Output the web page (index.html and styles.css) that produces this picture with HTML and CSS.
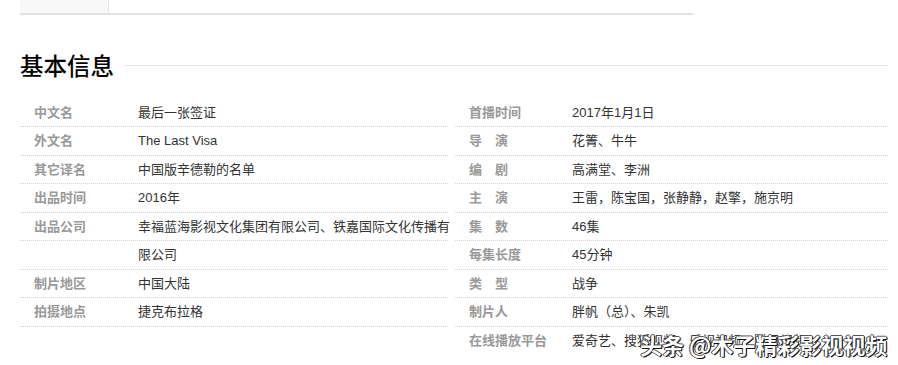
FILE: index.html
```
<!DOCTYPE html>
<html lang="zh-CN">
<head>
<meta charset="utf-8">
<title>基本信息</title>
<link rel="stylesheet" href="styles.css">
</head>
<body>
<div class="page">
  <div class="tabs"><div class="tab"></div></div>
  <div class="heading">
    <h2>基本信息</h2>
    <div class="rule"></div>
  </div>
  <div class="info">
    <dl class="col col-left">
      <div class="row"><dt>中文名</dt><dd>最后一张签证</dd></div>
      <div class="row"><dt>外文名</dt><dd>The Last Visa</dd></div>
      <div class="row"><dt>其它译名</dt><dd>中国版辛德勒的名单</dd></div>
      <div class="row"><dt>出品时间</dt><dd>2016年</dd></div>
      <div class="row"><dt>出品公司</dt><dd>幸福蓝海影视文化集团有限公司、铁嘉国际文化传播有</dd></div>
      <div class="row"><dt></dt><dd>限公司</dd></div>
      <div class="row"><dt>制片地区</dt><dd>中国大陆</dd></div>
      <div class="row"><dt>拍摄地点</dt><dd>捷克布拉格</dd></div>
    </dl>
    <dl class="col col-right">
      <div class="row"><dt>首播时间</dt><dd>2017年1月1日</dd></div>
      <div class="row"><dt>导　演</dt><dd>花箐、牛牛</dd></div>
      <div class="row"><dt>编　剧</dt><dd>高满堂、李洲</dd></div>
      <div class="row"><dt>主　演</dt><dd>王雷，陈宝国，张静静，赵擎，施京明</dd></div>
      <div class="row"><dt>集　数</dt><dd>46集</dd></div>
      <div class="row"><dt>每集长度</dt><dd>45分钟</dd></div>
      <div class="row"><dt>类　型</dt><dd>战争</dd></div>
      <div class="row"><dt>制片人</dt><dd>胖帆（总）、朱凯</dd></div>
      <div class="row last"><dt>在线播放平台</dt><dd>爱奇艺、搜狐视频、乐视视频、腾讯视频</dd></div>
    </dl>
  </div>
  <div class="watermark">头条 @木子精彩影视视频</div>
</div>
</body>
</html>
```
FILE: styles.css
```
html, body {
  margin: 0;
  padding: 0;
  background: #fff;
}
body {
  font-family: "Liberation Sans", "Noto Sans CJK SC", sans-serif;
  font-size: 13px;
  color: #333;
  overflow: hidden;
}
.page {
  position: relative;
  width: 898px;
  height: 365px;
  padding-left: 20px;
  box-sizing: border-box;
  overflow: hidden;
}
.tabs {
  width: 673px;
  height: 13px;
  border-bottom: 2px solid #e2e2e2;
}
.tab {
  width: 88px;
  height: 13px;
  background: #f8f8f8;
  border-right: 1px solid #e6e6e6;
}
.heading {
  display: flex;
  align-items: center;
  width: 868px;
  height: 30px;
  margin-top: 35px;
}
.heading h2 {
  margin: 0;
  font-family: "Noto Sans CJK SC", sans-serif;
  font-size: 23.5px;
  font-weight: 500;
  line-height: 30px;
  color: #000;
}
.rule {
  flex: 1;
  height: 1px;
  margin-left: 10px;
  background: #e8e8e8;
}
.info {
  display: grid;
  grid-template-columns: 428px 433px;
  column-gap: 7px;
  margin-top: 18.5px;
}
.col {
  margin: 0;
}
.row {
  display: flex;
  height: 27.57px;
  line-height: 27.57px;
  border-bottom: 1px dotted #d4d4d4;
}
.row.last {
  border-bottom: none;
}
.row dt {
  flex: none;
  color: #999;
  font-weight: 700;
  white-space: nowrap;
}
.row dd {
  margin: 0;
  white-space: nowrap;
}
.col-left dt {
  width: 104px;
  padding-left: 14px;
}
.col-right dt {
  width: 103px;
  padding-left: 14px;
}
.watermark {
  position: absolute;
  left: 640px;
  top: 331px;
  font-family: "Noto Sans CJK SC", sans-serif;
  font-size: 22px;
  line-height: 26px;
  font-weight: 700;
  color: #fff;
  white-space: nowrap;
  text-shadow: 1px 1px 0 #111, -1px 0 0 #333, 0 -1px 0 #555, 1px 0 0 #222;
}
```
